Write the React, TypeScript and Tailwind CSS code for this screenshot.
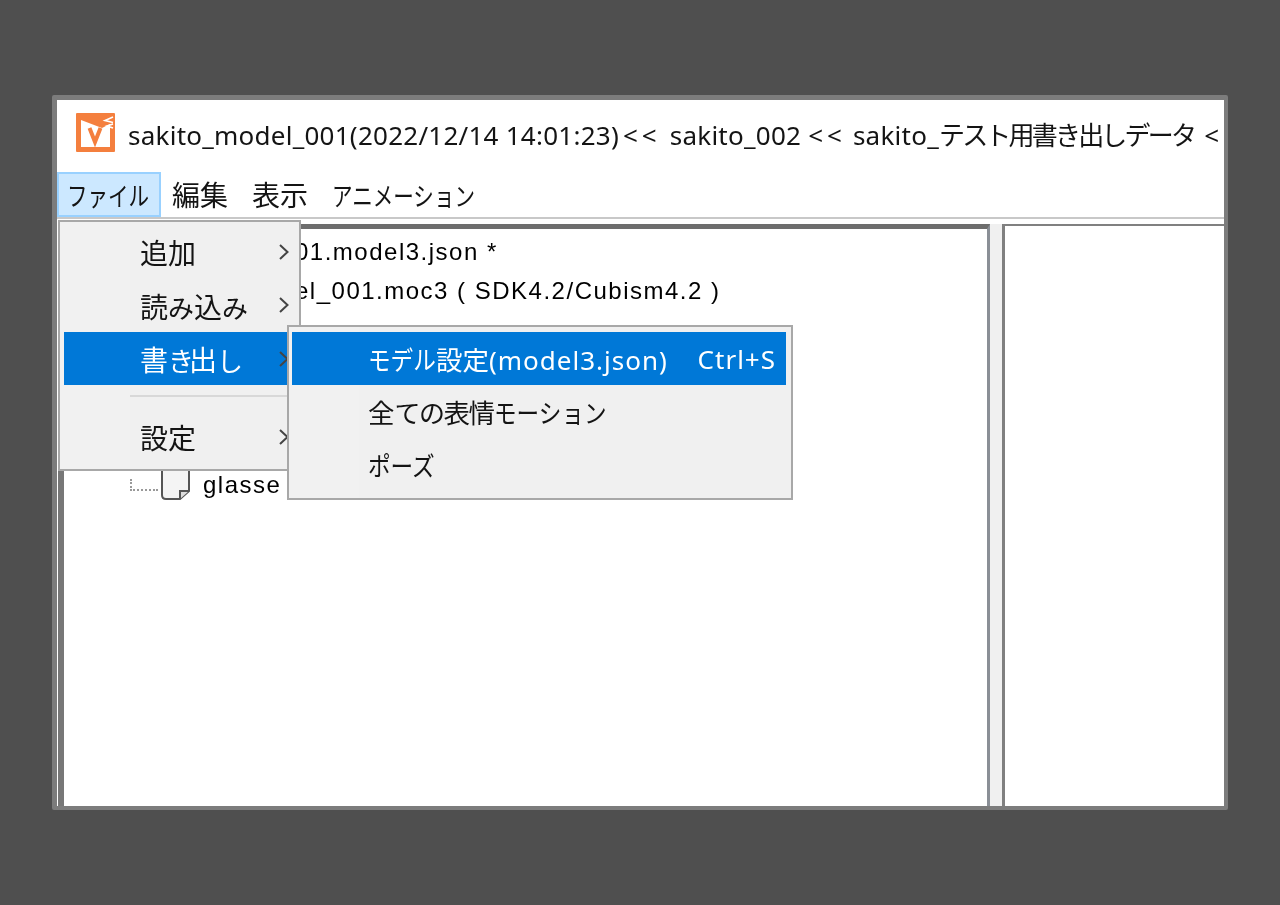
import React from 'react';

const uiFont = "font-['Noto_Sans','Noto_Sans_CJK_JP',sans-serif]";
const treeFont = "font-['Liberation_Sans','Noto_Sans_CJK_JP',sans-serif]";

const AppIcon = () => (
  <svg width="39" height="39" viewBox="0 0 39 39" className="mt-[13px] shrink-0">
    <rect x="0" y="0" width="39" height="39" rx="1" fill="#f47f3e" />
    <path d="M5 7 L26 15 L34 11 V34 H5 Z" fill="#fff" />
    <path d="M13.5 15 L19 29 L24.5 15" fill="none" stroke="#f47f3e" strokeWidth="4" />
    <path d="M37 4 L29 7.5 L37 9.5 M37 11 L31 13 L37 15" fill="none" stroke="#fff" strokeWidth="1.6" />
  </svg>
);

const Chevron = ({ color = '#444' }: { color?: string }) => (
  <svg width="12" height="18" viewBox="0 0 12 18">
    <path d="M2 2 L9.5 9 L2 16" fill="none" stroke={color} strokeWidth="2" />
  </svg>
);

const PageIcon = () => (
  <svg width="32" height="32" viewBox="0 0 32 32">
    <path d="M2 0 V26 Q2 30 6 30 H20 L29 22 V0" fill="#f4f4f4" stroke="#555" strokeWidth="2" />
    <path d="M20 30 V22 H29" fill="#ddd" stroke="#555" strokeWidth="2" />
  </svg>
);

// the original font has condensed kana next to wide kanji
const Narrow = ({ w, children }: { w: string; children: React.ReactNode }) => (
  <span className={`inline-block ${w}`}>
    <span className="inline-block origin-left scale-x-[0.79] text-[26px]">{children}</span>
  </span>
);
const Mid = ({ w, children }: { w: string; children: React.ReactNode }) => (
  <span className={`inline-block ${w}`}>
    <span className="inline-block origin-left scale-x-[0.87] text-[26px]">{children}</span>
  </span>
);
const Hira = ({ children }: { children: React.ReactNode }) => (
  <span className="text-[26px]">{children}</span>
);
const HiraTight = ({ children }: { children: React.ReactNode }) => (
  <span className="text-[26px] tracking-[-5px]">{children}</span>
);

const mainItems = [
  { key: 'add', label: <>追加</>, h: 'h-[53px]' },
  { key: 'load', label: <>読<Hira>み</Hira>込<Hira>み</Hira></>, h: 'h-[54px]' },
  { key: 'export', label: <>書<HiraTight>き</HiraTight>出<HiraTight>し</HiraTight></>, h: 'h-[53px]', active: true },
];

const subItems = [
  {
    key: 'model',
    label: <><Mid w="w-[68px]">モデル</Mid>設定<span className="text-[26px] tracking-[1px]">(model3.json)</span></>,
    shortcut: 'Ctrl+S',
    active: true,
  },
  { key: 'expr', label: <>全<span className="tracking-[-1.5px]"><Hira>ての</Hira>表情</span><Mid w="w-[113px]">モーション</Mid></> },
  { key: 'pose', label: <Mid w="w-[68px]">ポーズ</Mid> },
];

export default function App() {
  return (
    <div className={`h-[905px] w-[1280px] overflow-hidden bg-[#4f4f4f] px-[52px] pt-[95px] ${uiFont}`}>
      <div className="relative flex h-[715px] w-[1176px] flex-col overflow-hidden rounded-[2px] border-[5px] border-r-4 border-b-4 border-[#7c7c7c] bg-white text-[#141414] blur-[0.4px]">
        {/* title */}
        <div className="flex h-[72px] shrink-0 gap-[13px] overflow-hidden whitespace-nowrap pl-[19px] text-[26px] leading-[70px]">
          <AppIcon />
          <span className="tracking-[0.25px]">
            sakito_model_001(2022/12/14 14:01:23)
            <span className="mr-[2px] ml-[4px] tracking-[4px]">&lt;&lt;</span> sakito_002 <span className="tracking-[4px]">&lt;&lt;</span> sakito_
            <span className="tracking-[-2.8px]">テスト用書き出しデータ</span>
            <span className="ml-[10px]">&lt;</span>
          </span>
        </div>

        {/* menubar */}
        <div className="flex h-[45px] shrink-0 items-center whitespace-nowrap text-[28px]">
          <div className="flex h-full w-[104px] items-center justify-center border-2 border-[#99d1ff] bg-[#cce8ff]"><Narrow w="w-[84px]">ファイル</Narrow></div>
          <div className="ml-[11px]">編集</div>
          <div className="ml-[24px]">表示</div>
          <div className="ml-[24px]"><Narrow w="w-[144px]">アニメーション</Narrow></div>
        </div>
        <div className="h-[2px] shrink-0 bg-[#c8c8c8]" />

        {/* panels */}
        <div className="flex min-h-0 flex-1 pt-[5px]">
          <div className={`ml-[1px] h-full w-[932px] border-t-[5px] border-r-[3px] border-l-[6px] border-t-[#6d6d6d] border-r-[#8a8f96] border-l-[#777] bg-white text-[24px] tracking-[1.5px] text-black ${treeFont}`}>
            <div className="pt-[3px] pl-[231px] leading-[40px] whitespace-nowrap">01.model3.json *</div>
            <div className="pl-[231px] leading-[37px] whitespace-nowrap">el_001.moc3 ( SDK4.2/Cubism4.2 )</div>
            <div className="mt-[158px] flex items-center pl-[66px]">
              <div className="mr-[2px] h-[12px] w-[28px] border-b-2 border-l-2 border-dotted border-[#999]" />
              <PageIcon />
              <span className="ml-[11px]">glasse</span>
            </div>
          </div>
          <div className="w-[12px] shrink-0 bg-[#f0f0f0]" />
          <div className="flex-1 border-t-2 border-l-[3px] border-[#808080] bg-white" />
        </div>

        {/* file menu */}
        <div className="absolute top-[120px] left-[1px] w-[243px] whitespace-nowrap border-2 border-[#a8a8a8] bg-[linear-gradient(to_right,#f1f1f1_70px,#f0f0f0_70px)] pt-[3px] text-[28px]">
          {mainItems.map((item) => (
            <div
              key={item.key}
              className={`mx-[4px] flex items-center justify-between pr-[5px] pl-[76px] ${item.h} ${item.active ? 'bg-[#0078d7] text-white' : ''}`}
            >
              <span className="pt-[3px]">{item.label}</span>
              <Chevron />
            </div>
          ))}
          <div className="mt-[10px] mb-[13px] ml-[70px] h-[2px] bg-[#d8d8d8]" />
          <div className="mx-[4px] flex h-[53px] items-center justify-between pr-[5px] pl-[76px]">
            <span className="pt-[2px]">設定</span>
            <Chevron />
          </div>
          <div className="h-[6px]" />
        </div>

        {/* export submenu */}
        <div className="absolute top-[225px] left-[230px] w-[506px] whitespace-nowrap border-2 border-[#a8a8a8] bg-[linear-gradient(to_right,#f1f1f1_70px,#f0f0f0_70px)] pt-[5px] pb-[7px] text-[26.5px]">
          {subItems.map((item) => (
            <div
              key={item.key}
              className={`mr-[5px] ml-[3px] flex h-[53px] items-center justify-between pr-[10px] pl-[76px] ${item.active ? 'bg-[#0078d7] text-white' : ''}`}
            >
              <span className="pt-[4px]">{item.label}</span>
              {item.shortcut && <span className="pt-[2px] text-[26px] tracking-[1px]">{item.shortcut}</span>}
            </div>
          ))}
        </div>
      </div>
    </div>
  );
}
